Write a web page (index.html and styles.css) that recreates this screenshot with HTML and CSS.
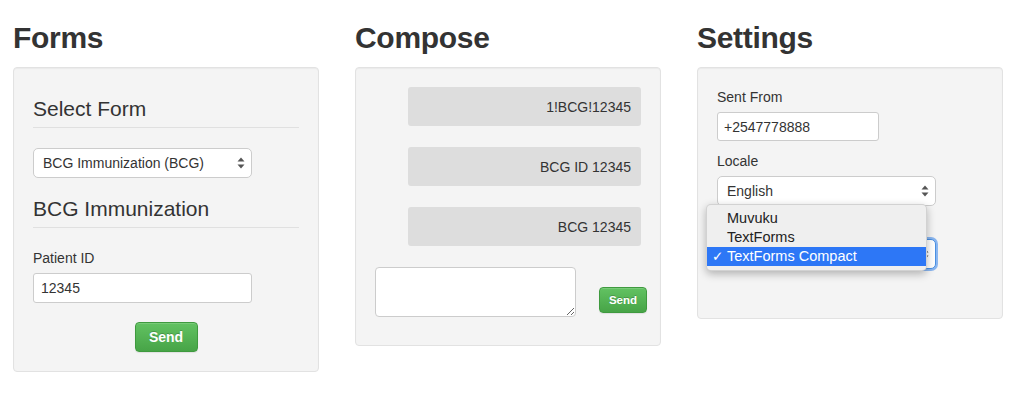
FILE: index.html
```html
<!DOCTYPE html>
<html lang="en">
<head>
<meta charset="utf-8">
<title>Forms</title>
<link rel="stylesheet" href="styles.css">
</head>
<body>
<main class="layout">
  <section class="column">
    <h2 class="title">Forms</h2>
    <div class="well">
      <h3 class="section-title first">Select Form</h3>
      <div class="select select-form">
        <span>BCG Immunization (BCG)</span>
        <svg class="arrows" width="8" height="12" viewBox="0 0 8 12"><path d="M4 0.5 L7.5 4.5 H0.5 Z M4 11.5 L7.5 7.5 H0.5 Z" fill="#555"/></svg>
      </div>
      <h3 class="section-title">BCG Immunization</h3>
      <label class="field-label">Patient ID</label>
      <input class="text-input patient" type="text" value="12345">
      <div class="actions">
        <button class="btn btn-send">Send</button>
      </div>
    </div>
  </section>

  <section class="column">
    <h2 class="title">Compose</h2>
    <div class="well compose">
      <div class="message">1!BCG!12345</div>
      <div class="message">BCG ID 12345</div>
      <div class="message">BCG 12345</div>
      <div class="compose-row">
        <textarea class="compose-box"></textarea>
        <button class="btn btn-small">Send</button>
      </div>
    </div>
  </section>

  <section class="column">
    <h2 class="title">Settings</h2>
    <div class="well settings">
      <label class="field-label">Sent From</label>
      <input class="text-input phone" type="text" value="+2547778888">
      <label class="field-label locale-label">Locale</label>
      <div class="select select-locale">
        <span>English</span>
        <svg class="arrows" width="8" height="12" viewBox="0 0 8 12"><path d="M4 0.5 L7.5 4.5 H0.5 Z M4 11.5 L7.5 7.5 H0.5 Z" fill="#555"/></svg>
      </div>
      <div class="select select-format focused">
        <span></span>
        <svg class="arrows" width="8" height="12" viewBox="0 0 8 12"><path d="M4 0.5 L7.5 4.5 H0.5 Z M4 11.5 L7.5 7.5 H0.5 Z" fill="#555"/></svg>
      </div>
      <ul class="menu">
        <li class="menu-item"><span class="check"></span>Muvuku</li>
        <li class="menu-item"><span class="check"></span>TextForms</li>
        <li class="menu-item selected"><span class="check">✓</span>TextForms Compact</li>
      </ul>
    </div>
  </section>
</main>
</body>
</html>
```

FILE: styles.css
```css
* { box-sizing: border-box; }

html, body {
  margin: 0;
  padding: 0;
  background: #ffffff;
}

body {
  font-family: "Liberation Sans", Arial, Helvetica, sans-serif;
  font-size: 14px;
  color: #333333;
}

.layout {
  display: grid;
  grid-template-columns: 306px 306px 306px;
  column-gap: 36px;
  padding-left: 13px;
  align-items: start;
}

.title {
  font-size: 30px;
  font-weight: bold;
  line-height: 33px;
  letter-spacing: -0.3px;
  margin: 21px 0 13px 0;
  color: #333333;
}

.well {
  position: relative;
  background: #f4f4f4;
  border: 1px solid #e2e2e2;
  border-radius: 4px;
  padding: 19px;
  box-shadow: inset 0 1px 1px rgba(0, 0, 0, 0.04);
}

.section-title {
  font-size: 21px;
  font-weight: normal;
  line-height: 23px;
  margin: 19px 0 20px 0;
  padding-bottom: 7px;
  border-bottom: 1px solid #e0e0e0;
  color: #333333;
}

.section-title.first {
  margin-top: 10px;
}

.select {
  display: flex;
  align-items: center;
  justify-content: space-between;
  height: 30px;
  background: #ffffff;
  border: 1px solid #cccccc;
  border-radius: 5px;
  padding: 0 6px 0 9px;
  font-size: 14px;
  color: #333333;
}

.select .arrows {
  flex: none;
}

.select-form {
  width: 219px;
}

.field-label {
  display: block;
  line-height: 20px;
  margin-bottom: 5px;
  font-weight: normal;
}

.text-input {
  display: block;
  height: 30px;
  border: 1px solid #cccccc;
  border-radius: 3px;
  background: #ffffff;
  font-family: "Liberation Sans", Arial, Helvetica, sans-serif;
  font-size: 14px;
  color: #333333;
  padding: 0 7px;
  margin: 0;
  outline: none;
}

.patient {
  width: 219px;
}

.actions {
  display: flex;
  justify-content: center;
  margin-top: 19px;
}

.btn {
  font-family: "Liberation Sans", Arial, Helvetica, sans-serif;
  font-weight: bold;
  color: #ffffff;
  background: linear-gradient(#62c262, #47a447);
  border: 1px solid #3f9a3f;
  border-radius: 4px;
  text-shadow: 0 -1px 0 rgba(0, 0, 0, 0.2);
  box-shadow: inset 0 1px 0 rgba(255, 255, 255, 0.15), 0 1px 1px rgba(0, 0, 0, 0.08);
  padding: 0;
  cursor: pointer;
}

.btn-send {
  width: 63px;
  height: 30px;
  font-size: 14px;
}

.btn-small {
  flex: none;
  width: 48px;
  height: 26px;
  font-size: 11.5px;
  margin-left: 23px;
  margin-top: 20px;
}

.message {
  width: 233px;
  height: 39px;
  margin-left: 33px;
  margin-bottom: 21px;
  background: #dddddd;
  border-radius: 3px;
  padding: 0 10px;
  display: flex;
  align-items: center;
  justify-content: flex-end;
  font-size: 14px;
  color: #333333;
}

.compose-row {
  display: flex;
  align-items: flex-start;
  margin-bottom: 9px;
}

.compose-box {
  flex: none;
  display: block;
  width: 201px;
  height: 50px;
  margin: 0;
  border: 1px solid #cccccc;
  border-radius: 4px;
  background: #ffffff;
  font-family: "Liberation Sans", Arial, Helvetica, sans-serif;
  font-size: 14px;
  padding: 6px;
  outline: none;
}

.phone {
  width: 162px;
  height: 29px;
  padding: 0 6px;
}

.locale-label {
  margin-top: 10px;
}

.select-locale {
  width: 219px;
}

.select-format {
  width: 219px;
  margin-top: 33px;
  margin-bottom: 30px;
}

.select.focused {
  border-color: #4a90e2;
  box-shadow: 0 0 0 2px #8ab6f0;
}

.menu {
  position: absolute;
  left: 8px;
  top: 136px;
  width: 221px;
  margin: 0;
  padding: 4px 0;
  list-style: none;
  background: #efefef;
  border: 1px solid rgba(0, 0, 0, 0.12);
  border-radius: 5px;
  box-shadow: 0 3px 9px rgba(0, 0, 0, 0.28);
}

.menu-item {
  height: 19px;
  line-height: 19px;
  padding-left: 5px;
  font-size: 14.5px;
  color: #222222;
  white-space: nowrap;
  display: flex;
  align-items: center;
}

.menu-item .check {
  display: inline-block;
  width: 15px;
  flex: none;
  font-family: "DejaVu Sans", sans-serif;
  font-size: 13.5px;
  font-weight: bold;
}

.menu-item.selected {
  background: #2d77f6;
  color: #ffffff;
}
```
